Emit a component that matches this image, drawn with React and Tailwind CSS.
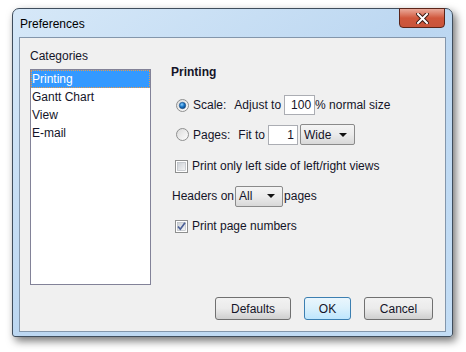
import React from "react";

function Radio({ checked }) {
  return (
    <svg width="13" height="13" viewBox="0 0 13 13">
      <defs>
        <linearGradient id={checked ? "rg1" : "rg0"} x1="0" y1="0" x2="1" y2="1">
          <stop offset="0" stopColor="#d9d9d9" />
          <stop offset="1" stopColor="#ffffff" />
        </linearGradient>
        <radialGradient id="rdot" cx="0.4" cy="0.35" r="0.7">
          <stop offset="0" stopColor="#8fd0ff" />
          <stop offset="0.5" stopColor="#1a78c8" />
          <stop offset="1" stopColor="#0b3e7a" />
        </radialGradient>
      </defs>
      <circle cx="6.5" cy="6.5" r="6" fill={`url(#${checked ? "rg1" : "rg0"})`} stroke="#8e8f8f" />
      {checked && <circle cx="6.5" cy="6.5" r="3.2" fill="url(#rdot)" stroke="#1d4f85" strokeWidth="0.6" />}
    </svg>
  );
}

function Check({ checked }) {
  return (
    <svg width="13" height="13" viewBox="0 0 13 13">
      <defs>
        <linearGradient id="cb" x1="0" y1="0" x2="1" y2="1">
          <stop offset="0" stopColor="#cbcfd5" />
          <stop offset="1" stopColor="#f6f6f6" />
        </linearGradient>
      </defs>
      <rect x="0.5" y="0.5" width="12" height="12" fill="#fff" stroke="#8e8f8f" />
      <rect x="2.5" y="2.5" width="8" height="8" fill="url(#cb)" stroke="#aeb3b9" strokeWidth="0.6" />
      {checked && (
        <path d="M3 6.5 L5.3 9.2 L10 2.8" fill="none" stroke="#4a5f97" strokeWidth="1.7" />
      )}
    </svg>
  );
}

function Select({ label, width }) {
  return (
    <div
      className={`${width} h-[21px] flex items-center justify-between pl-[3px] pr-[7px] border border-[#8a8a8a] rounded-[2px] bg-gradient-to-b from-[#f4f4f4] via-[#ebebeb] to-[#d8d8d8]`}
    >
      <span>{label}</span>
      <svg width="8" height="4" viewBox="0 0 8 4">
        <path d="M0 0 L8 0 L4 4 Z" fill="#111" />
      </svg>
    </div>
  );
}

function Btn({ children, width, primary }) {
  return (
    <div
      className={`${width} h-[23px] flex items-center justify-center rounded-[3px] border ${
        primary
          ? "border-[#3c7fb1] bg-gradient-to-b from-[#eaf6fd] via-[#d9f0fc] to-[#bee6fd]"
          : "border-[#707070] bg-gradient-to-b from-[#f2f2f2] via-[#ebebeb] to-[#cfcfcf]"
      }`}
    >
      {children}
    </div>
  );
}

export default function App() {
  const cats = ["Printing", "Gantt Chart", "View", "E-mail"];

  return (
    <div className="w-[466px] h-[352px] bg-white pl-[12px] pt-[8px] font-['Liberation_Sans',Arial,sans-serif] text-[12px] text-[#141428]">
      <div className="w-[441px] h-[329px] flex flex-col px-[6px] pb-[4px] rounded-t-[7px] rounded-b-[3px] border border-[#3f4d5c] bg-gradient-to-br from-[#d6e8f8] via-[#bcd7f1] to-[#c3ddf5] shadow-[3px_4px_9px_rgba(0,0,0,0.55)]">
        <div className="h-[28px] flex justify-between">
          <span className="self-center pl-[1px] pt-[1px] text-black">Preferences</span>
          <div className="-mt-px mr-[1px] w-[46px] h-[20px] flex items-center justify-center rounded-b-[4px] border border-[#5a2419] bg-gradient-to-b from-[#e9a99a] via-[#d0573c] to-[#c8543a]">
            <svg width="13" height="11" viewBox="0 0 13 11">
              <path d="M2 1 L11 10 M11 1 L2 10" stroke="#3a1a14" strokeWidth="4" strokeLinecap="square" />
              <path d="M2 1 L11 10 M11 1 L2 10" stroke="#ffffff" strokeWidth="2" strokeLinecap="square" />
            </svg>
          </div>
        </div>

        <div className="flex-1 flex flex-col border border-[#8396ab] bg-[#f0f0f0]">
          <div className="flex pt-[10px] pl-[10px]">
            <div className="flex flex-col">
              <span className="h-[16px] leading-[16px]">Categories</span>
              <div className="mt-[5px] w-[121px] h-[216px] border border-[#828298] bg-white">
                {cats.map((c, i) => (
                  <div
                    key={c}
                    className={`h-[18px] leading-[16px] border ${
                      i === 0
                        ? "bg-[#3399ff] text-white border-dotted border-[#e69a4c]"
                        : "border-transparent"
                    }`}
                  >
                    {c}
                  </div>
                ))}
              </div>
            </div>

            <div className="ml-[20px] pt-[16px] flex flex-col">
              <span className="h-[16px] leading-[16px] font-bold">Printing</span>

              <div className="mt-[15px] h-[20px] flex items-center pl-[5px]">
                <Radio checked />
                <span className="ml-[4px]">Scale:</span>
                <span className="ml-[8px]">Adjust to</span>
                <div className="ml-[3px] w-[31px] h-[20px] border border-[#abadb3] bg-white text-right pr-[3px] leading-[18px]">
                  100
                </div>
                <span>% normal size</span>
              </div>

              <div className="mt-[9px] h-[21px] flex items-center pl-[5px]">
                <Radio />
                <span className="ml-[4px]">Pages:</span>
                <span className="ml-[8px]">Fit to</span>
                <div className="ml-[3px] w-[30px] h-[20px] border border-[#abadb3] bg-white text-right pr-[3px] leading-[18px]">
                  1
                </div>
                <div className="ml-[2px]">
                  <Select label="Wide" width="w-[55px]" />
                </div>
              </div>

              <div className="mt-[13px] h-[16px] flex items-center pl-[4px]">
                <Check />
                <span className="ml-[4px]">Print only left side of left/right views</span>
              </div>

              <div className="mt-[11px] h-[22px] flex items-center pl-[1px]">
                <span>Headers on</span>
                <div className="ml-[1px]">
                  <Select label="All" width="w-[48px]" />
                </div>
                <span className="ml-[1px]">pages</span>
              </div>

              <div className="mt-[11px] h-[16px] flex items-center pl-[4px]">
                <Check checked />
                <span className="ml-[4px]">Print page numbers</span>
              </div>
            </div>
          </div>

          <div className="mt-auto pb-[11px] pr-[12px] flex justify-end gap-[13px]">
            <Btn width="w-[76px]">Defaults</Btn>
            <Btn width="w-[47px]" primary>
              OK
            </Btn>
            <Btn width="w-[69px]">Cancel</Btn>
          </div>
        </div>
      </div>
    </div>
  );
}
